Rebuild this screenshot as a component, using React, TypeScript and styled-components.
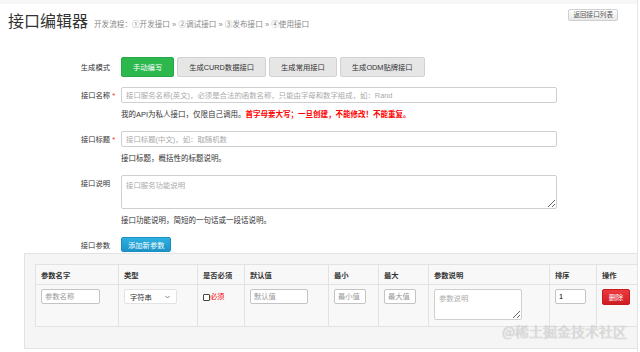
import React from "react";
import styled, { createGlobalStyle, css } from "styled-components";

const GlobalStyle = createGlobalStyle`
  html, body { margin: 0; padding: 0; background: #fff; }
  body { font-family: "Liberation Sans", "Noto Sans CJK SC", sans-serif; color: #333; }
  * { box-sizing: border-box; }
  input, textarea, select, button { font-family: inherit; }
`;

const Page = styled.div`
  position: relative;
  width: 638px;
  height: 352px;
  overflow: hidden;
  border-right: 1px solid #e4e4e4;
  display: flex;
  flex-direction: column;
`;

const TopStrip = styled.div`
  flex: none;
  height: 4px;
  background: #f6f6f6;
`;

const Header = styled.header`
  flex: none;
  height: 53px;
  display: flex;
  align-items: flex-start;
  justify-content: space-between;
  padding: 5px 19px 0 8px;
`;

const TitleLine = styled.div`
  display: flex;
  align-items: baseline;
`;

const Title = styled.h1`
  margin: 0;
  font-size: 16px;
  line-height: 26px;
  font-weight: 400;
  color: #333;
`;

const Flow = styled.span`
  margin-left: 6px;
  font-size: 7.6px;
  color: #888;
`;

const BackButton = styled.button`
  height: 12px;
  padding: 0 4px;
  font-size: 6.6px;
  line-height: 10px;
  color: #555;
  border: 1px solid #d0d0d0;
  border-radius: 2px;
  background: linear-gradient(#ffffff, #e8e8e8);
`;

const Form = styled.div`
  width: 557px;
  display: flex;
  flex-direction: column;
  gap: 10px;
`;

const Row = styled.div`
  display: grid;
  grid-template-columns: 110px 1fr;
  column-gap: 11px;
  align-items: start;
`;

const Label = styled.div<{ $h: number }>`
  height: ${(p) => p.$h}px;
  display: flex;
  align-items: center;
  justify-content: flex-end;
  font-size: 7.3px;
  color: #333;
`;

const Star = styled.span`
  color: #e22;
  margin-left: 2px;
  margin-right: -5px;
`;

const Field = styled.div`
  display: flex;
  flex-direction: column;
`;

const ButtonGroup = styled.div`
  display: flex;
  gap: 3px;
`;

const ModeButton = styled.button<{ $active?: boolean }>`
  height: 20px;
  padding: 0 11px;
  font-size: 7.3px;
  border-radius: 2px;
  ${(p) =>
    p.$active
      ? css`
          color: #fff;
          background: #2db84e;
          border: 1px solid #27a846;
        `
      : css`
          color: #333;
          background: #e6e6e6;
          border: 1px solid #d2d2d2;
        `}
`;

const TextInput = styled.input`
  width: 100%;
  height: 16px;
  padding: 0 4px;
  font-size: 7.4px;
  color: #333;
  border: 1px solid #cfcfcf;
  border-radius: 2px;
  outline: none;
  &::placeholder { color: #aaa; }
`;

const TextArea = styled.textarea<{ $h: number }>`
  width: 100%;
  height: ${(p) => p.$h}px;
  padding: 3px 4px;
  font-size: 7.4px;
  color: #333;
  border: 1px solid #cfcfcf;
  border-radius: 2px;
  outline: none;
  display: block;
  &::placeholder { color: #aaa; }
`;

const Help = styled.div`
  margin-top: 6px;
  font-size: 7.5px;
  line-height: 12px;
  color: #333;
`;

const Warn = styled.span`
  color: #f00;
  font-weight: 700;
`;

const AddButton = styled.button`
  align-self: flex-start;
  height: 15px;
  padding: 0 6px;
  font-size: 7.3px;
  color: #fff;
  border: 1px solid #1b8fc2;
  border-radius: 2px;
  background: linear-gradient(#2eb0e0, #1b94c9);
`;

const Panel = styled.div`
  flex: none;
  margin: 1px 0 0 24px;
  height: 96px;
  padding: 10px 0 0 10px;
  background: #f5f5f5;
  border: 1px solid #e3e3e3;
  border-right: none;
`;

const Table = styled.table`
  width: 602px;
  table-layout: fixed;
  border-collapse: collapse;
  background: #f8f8f8;
  font-size: 7.3px;
`;

const Th = styled.th`
  height: 20px;
  padding: 0 5px;
  text-align: left;
  font-weight: 700;
  color: #333;
  border: 1px solid #e2e2e2;
`;

const Td = styled.td`
  height: 42px;
  padding: 4px 5px;
  vertical-align: top;
  border: 1px solid #e2e2e2;
`;

const CellInput = styled.input<{ $w: number }>`
  width: ${(p) => p.$w}px;
  height: 15px;
  padding: 0 3px;
  font-size: 7.3px;
  color: #000;
  border: 1px solid #c4c4c4;
  border-radius: 2px;
  outline: none;
  &::placeholder { color: #999; }
`;

const CellArea = styled.textarea`
  width: 88px;
  height: 31px;
  padding: 3px 4px;
  font-size: 7.3px;
  border: 1px solid #cfcfcf;
  border-radius: 2px;
  outline: none;
  display: block;
  &::placeholder { color: #aaa; }
`;

const SelectBox = styled.div`
  position: relative;
  width: 53px;
  height: 15px;
  background: #fff;
  border: 1px solid #e2e2e2;
  border-radius: 2px;
  display: flex;
  align-items: center;
  padding-left: 5px;
  font-size: 7.3px;
  color: #333;
`;

const Chevron = styled.svg`
  position: absolute;
  right: 6px;
  top: 5px;
`;

const CheckLine = styled.label`
  display: flex;
  align-items: center;
  margin-top: 2px;
  color: #f00;
  font-size: 7.3px;
`;

const Box = styled.span`
  width: 7px;
  height: 7px;
  margin-top: 2px;
  border: 1px solid #444;
  border-radius: 1px;
  background: #fff;
`;

const DeleteButton = styled.button`
  width: 28px;
  height: 16px;
  padding: 0;
  font-size: 7.3px;
  color: #fff;
  border: 1px solid #c91a1d;
  border-radius: 2px;
  background: linear-gradient(#ec3b3e, #cf1e21);
`;

const Watermark = styled.div`
  position: absolute;
  right: 10px;
  bottom: 12px;
  font-size: 14px;
  line-height: 17px;
  font-weight: 300;
  color: rgba(235, 235, 235, 0.95);
  text-shadow: 0 0 1px rgba(0, 0, 0, 0.45);
  font-family: "Noto Sans CJK SC", sans-serif;
`;

const colWidths = [83, 79, 47, 84, 50, 50, 121, 47, 41];
const headers = ["参数名字", "类型", "是否必须", "默认值", "最小", "最大", "参数说明", "排序", "操作"];

export default function App() {
  return (
    <>
      <GlobalStyle />
      <Page>
        <TopStrip />
        <Header>
          <TitleLine>
            <Title>接口编辑器</Title>
            <Flow>开发流程：①开发接口 » ②调试接口 » ③发布接口 » ④使用接口</Flow>
          </TitleLine>
          <BackButton>返回接口列表</BackButton>
        </Header>
        <Form>
          <Row>
            <Label $h={20}>生成模式</Label>
            <ButtonGroup>
              <ModeButton $active>手动编写</ModeButton>
              <ModeButton>生成CURD数据接口</ModeButton>
              <ModeButton>生成常用接口</ModeButton>
              <ModeButton>生成ODM贴牌接口</ModeButton>
            </ButtonGroup>
          </Row>
          <Row>
            <Label $h={16}>
              接口名称<Star>*</Star>
            </Label>
            <Field>
              <TextInput placeholder="接口服务名称(英文)，必须是合法的函数名称，只能由字母和数字组成，如：Rand" />
              <Help>
                我的API为私人接口，仅限自己调用。<Warn>首字母要大写；一旦创建，不能修改！不能重复。</Warn>
              </Help>
            </Field>
          </Row>
          <Row>
            <Label $h={16}>
              接口标题<Star>*</Star>
            </Label>
            <Field>
              <TextInput placeholder="接口标题(中文)，如：取随机数" />
              <Help>接口标题，概括性的标题说明。</Help>
            </Field>
          </Row>
          <Row>
            <Label $h={16}>接口说明</Label>
            <Field>
              <TextArea $h={34} placeholder="接口服务功能说明" />
              <Help>接口功能说明，简短的一句话或一段话说明。</Help>
            </Field>
          </Row>
          <Row>
            <Label $h={15}>接口参数</Label>
            <Field>
              <AddButton>添加新参数</AddButton>
            </Field>
          </Row>
        </Form>
        <Panel>
          <Table>
            <colgroup>
              {colWidths.map((w, i) => (
                <col key={i} style={{ width: w }} />
              ))}
            </colgroup>
            <thead>
              <tr>
                {headers.map((h) => (
                  <Th key={h}>{h}</Th>
                ))}
              </tr>
            </thead>
            <tbody>
              <tr>
                <Td>
                  <CellInput $w={59} placeholder="参数名称" />
                </Td>
                <Td>
                  <SelectBox>
                    字符串
                    <Chevron width="5" height="4" viewBox="0 0 5 4">
                      <path d="M0.5 1 L2.5 3 L4.5 1" fill="none" stroke="#666" strokeWidth="0.8" />
                    </Chevron>
                  </SelectBox>
                </Td>
                <Td>
                  <CheckLine>
                    <Box />
                    必须
                  </CheckLine>
                </Td>
                <Td>
                  <CellInput $w={58} placeholder="默认值" />
                </Td>
                <Td>
                  <CellInput $w={32} placeholder="最小值" />
                </Td>
                <Td>
                  <CellInput $w={32} placeholder="最大值" />
                </Td>
                <Td>
                  <CellArea placeholder="参数说明" />
                </Td>
                <Td>
                  <CellInput $w={31} defaultValue="1" />
                </Td>
                <Td>
                  <DeleteButton>删除</DeleteButton>
                </Td>
              </tr>
            </tbody>
          </Table>
        </Panel>
        <Watermark>@稀土掘金技术社区</Watermark>
      </Page>
    </>
  );
}
